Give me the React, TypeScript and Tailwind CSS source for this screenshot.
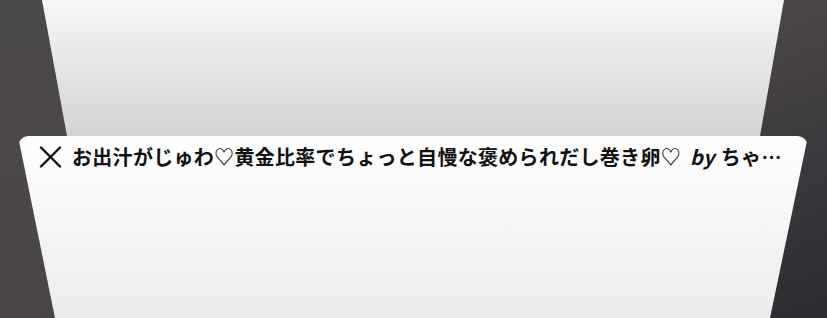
import React from 'react';

const title = 'お出汁がじゅわ♡黄金比率でちょっと自慢な褒められだし巻き卵♡';

export default function App() {
  return (
    <div className="w-[827px] h-[318px] overflow-hidden bg-gradient-to-br from-[#4b484b] via-[#4a4548] to-[#2b2c31] flex flex-col">
      {/* card behind, previous in stack */}
      <div className="ml-[42px] w-[742px] h-[136px] shrink-0 bg-gradient-to-b from-[#f7f7f7] to-[#d4d4d4] [clip-path:polygon(0_0,100%_0,calc(100%-24px)_100%,25px_100%)]" />

      {/* front card */}
      <div className="ml-[18px] w-[790px] h-[182px] shrink-0 rounded-t-[11px] bg-gradient-to-b from-white to-[#ececec] [clip-path:polygon(0_0,100%_0,calc(100%-38px)_100%,37px_100%)]">
        <div className="flex items-center h-[40px] pl-[21px] pt-[1px]">
          <svg width="23" height="22" viewBox="0 0 23 22" className="shrink-0">
            <path d="M2 1.5 L21 20.5 M21 1.5 L2 20.5" stroke="#111" strokeWidth="2.4" strokeLinecap="round" />
          </svg>
          <p className="ml-[10px] flex items-center whitespace-nowrap text-[20px] leading-[24px] font-bold tracking-[0.3px] text-[#111] [font-family:'Noto_Sans_CJK_JP',sans-serif]">
            <span>{title}</span>
            <span className="italic ml-[9px] mr-[6px]">by</span>
            <span>ちゃ…</span>
          </p>
        </div>
      </div>
    </div>
  );
}
